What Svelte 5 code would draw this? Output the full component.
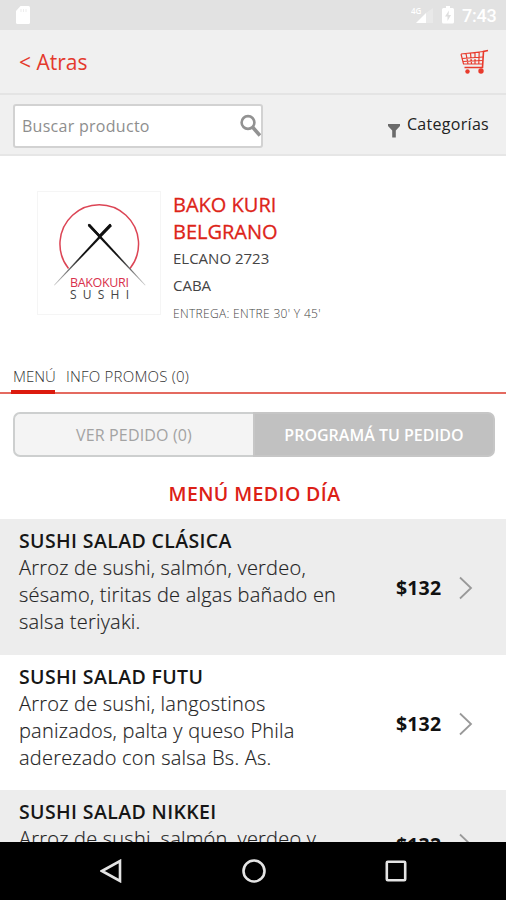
<script lang="ts">
  type Product = {
    name: string
    lines: string[]
    price: number
  }

  let search = $state('')

  const products: Product[] = [
    {
      name: 'SUSHI SALAD CLÁSICA',
      lines: ['Arroz de sushi, salmón, verdeo,', 'sésamo, tiritas de algas bañado en', 'salsa teriyaki.'],
      price: 132,
    },
    {
      name: 'SUSHI SALAD FUTU',
      lines: ['Arroz de sushi, langostinos', 'panizados, palta y queso Phila', 'aderezado con salsa Bs. As.'],
      price: 132,
    },
    {
      name: 'SUSHI SALAD NIKKEI',
      lines: ['Arroz de sushi, salmón, verdeo y'],
      price: 132,
    },
  ]
</script>

<div class="screen">
  <div class="status">
    <svg class="sd" width="16" height="19" viewBox="0 0 16 19">
      <path d="M5.500 0H13.500Q15 0 15 1.500V16.500Q15 18 13.500 18H2.500Q1 18 1 16.500V5Z" fill="#fff" />
      <path d="M6 3v3M8.500 3v3M11 3v3" stroke="#ededed" />
    </svg>
    <svg class="signal" width="23" height="18" viewBox="0 0 23 18">
      <path d="M22 2V17H15V7Z" fill="#e9e9e9" />
      <path d="M15 7V17H5Z" fill="#fff" />
      <text x="0" y="8" font-size="8" font-weight="600" fill="#fff">4G</text>
    </svg>
    <svg class="battery" width="12" height="18" viewBox="0 0 12 18">
      <path d="M4 0h4v2h2.500Q12 2 12 3.500v12.500Q12 17.500 10.500 17.500h-9Q0 17.500 0 16V3.500Q0 2 1.500 2H4Z" fill="#fff" />
      <path d="M7 4.500L3 10.500h2.500V15L9 9H6.500Z" fill="#dedede" />
    </svg>
    <span class="time">7:43</span>
  </div>

  <header>
    <span class="back">&lt; Atras</span>
    <svg width="29" height="26" viewBox="0 0 29 26" fill="none" stroke="#e83a2c">
      <path d="M28 1.500L23.500 2.500L22.500 18.500H4.500" stroke-width="1.600" />
      <path d="M1 5L23.500 2.500M1 5L3.500 15H22.500M2 9.500L23 8M3 12.500L22.700 11.500M6 4.500L8 15M10.500 4L11.500 15M15 3.500V15M19.200 3L18.800 15" stroke-width="1.200" />
      <circle cx="7.500" cy="22.500" r="2.200" fill="#e83a2c" stroke="none" />
      <circle cx="21" cy="22" r="2.700" fill="#e83a2c" stroke="none" />
    </svg>
  </header>

  <div class="filters">
    <label class="search">
      <input type="text" placeholder="Buscar producto" bind:value={search} />
      <svg width="22" height="24" viewBox="0 0 22 24" fill="none" stroke="#929292">
        <circle cx="9" cy="8.500" r="6.400" stroke-width="2.600" />
        <path d="M13.500 13L21 21.500" stroke-width="3.600" />
      </svg>
    </label>
    <div class="categories">
      <svg width="12" height="14" viewBox="0 0 12 14">
        <path d="M0 0H12V2L7.800 6.500V13.500H4.200V6.500L0 2Z" fill="#6b6b6b" />
      </svg>
      <span>Categorías</span>
    </div>
  </div>

  <section class="shop">
    <svg class="logo" width="124" height="124" viewBox="0 0 124 124">
      <defs>
        <linearGradient id="left-stick" gradientUnits="userSpaceOnUse" x1="72" y1="34" x2="17" y2="94">
          <stop offset="0.500" stop-color="#111" />
          <stop offset="1" stop-color="#ccc" />
        </linearGradient>
        <linearGradient id="right-stick" gradientUnits="userSpaceOnUse" x1="52" y1="34" x2="108" y2="94">
          <stop offset="0.500" stop-color="#111" />
          <stop offset="1" stop-color="#ccc" />
        </linearGradient>
      </defs>
      <rect x="0.500" y="0.500" width="123" height="123" fill="#fff" stroke="#f5f5f5" />
      <path d="M31.500 77.500A39.300 39.300 0 1 1 93 77.500" fill="none" stroke="#dc4555" stroke-width="1.500" />
      <path d="M73 33L75 35L17.500 94.500L17 94Z" fill="url(#left-stick)" />
      <path d="M51 35L53 33L108.500 94L108 94.500Z" fill="url(#right-stick)" />
      <path d="M73 34L62 45.500M52 34L63 45.500" stroke="#111" stroke-width="2.300" stroke-linecap="round" />
      <text x="33" y="96" textLength="59" font-size="12.500" fill="#d9304c">BAKOKURI</text>
      <text x="33" y="108" textLength="59" font-size="12" fill="#444">SUSHI</text>
    </svg>
    <div class="details">
      <h1>BAKO KURI<br />BELGRANO</h1>
      <p>ELCANO 2723</p>
      <p>CABA</p>
      <p class="delivery">ENTREGA: ENTRE 30' Y 45'</p>
    </div>
  </section>

  <nav>
    <span class="tab active">MENÚ</span>
    <span class="tab promos">INFO PROMOS (0)</span>
  </nav>

  <div class="actions">
    <button class="order">VER PEDIDO (0)</button>
    <button class="schedule">PROGRAMÁ TU PEDIDO</button>
  </div>

  <h2>MENÚ MEDIO DÍA</h2>

  <main>
    {#each products as product}
      <article>
        <div class="text">
          <h3>{product.name}</h3>
          {#each product.lines as line}
            <p>{line}</p>
          {/each}
        </div>
        <span class="price">${product.price}</span>
        <svg class="chevron" width="14" height="24" viewBox="0 0 14 24">
          <path d="M1 1.500L12 12L1 22.500" fill="none" stroke="#999" stroke-width="1.800" />
        </svg>
      </article>
    {/each}
  </main>

  <footer>
    <svg width="22" height="24" viewBox="0 0 22 24">
      <path d="M20 2V22L2 12Z" />
    </svg>
    <svg width="24" height="24" viewBox="0 0 24 24">
      <circle cx="12" cy="12" r="10.500" />
    </svg>
    <svg width="22" height="22" viewBox="0 0 22 22">
      <rect x="1.800" y="1.800" width="18.400" height="18.400" rx="1" />
    </svg>
  </footer>
</div>

<style>
  :global(body) {
    margin: 0;
    overflow: hidden;
  }

  .screen {
    display: flex;
    flex-direction: column;
    width: 506px;
    height: 900px;
    overflow: hidden;
    background: #fff;
    color: #222;
    font-family: 'Open Sans', sans-serif;
  }

  .screen * {
    box-sizing: border-box;
  }

  h1,
  h2,
  h3,
  p {
    margin: 0;
  }

  svg {
    display: block;
    flex: none;
  }

  .status {
    display: flex;
    flex: none;
    align-items: center;
    height: 30px;
    padding: 0 9px 0 15px;
    background: #e2e2e2;
    color: #fff;
  }

  .signal {
    margin-left: auto;
  }

  .battery {
    margin: 0 8px 0 8px;
  }

  .time {
    width: 35px;
    padding-top: 2px;
    font: 500 18px/30px Roboto, sans-serif;
    letter-spacing: -0.2px;
    white-space: nowrap;
  }

  header {
    display: flex;
    flex: none;
    align-items: center;
    justify-content: space-between;
    height: 65px;
    padding: 0 17px 0 19px;
    background: #f0f0f0;
    border-bottom: 2px solid #e4e4e4;
  }

  .back {
    color: #e4392d;
    font-size: 21px;
    line-height: 28px;
  }

  .filters {
    display: flex;
    flex: none;
    align-items: center;
    justify-content: space-between;
    height: 61px;
    padding: 2px 17px 0 13px;
    background: #f0f0f0;
    border-bottom: 2px solid #e6e6e6;
  }

  .search {
    display: flex;
    align-items: center;
    width: 250px;
    height: 44px;
    padding: 0 0 0 7px;
    background: #fff;
    border: 2px solid #d2d2d2;
    border-radius: 3px;
  }

  input {
    flex: 1;
    min-width: 0;
    padding: 0;
    border: 0;
    outline: 0;
    font: 16px 'Open Sans', sans-serif;
    letter-spacing: 0.28px;
  }

  input::placeholder {
    color: #8e8e8e;
  }

  .categories {
    display: flex;
    align-items: center;
    gap: 7px;
    font-size: 16px;
    letter-spacing: 0.3px;
    line-height: 22px;
    padding-bottom: 4px;
  }

  .categories svg {
    margin-top: 15px;
  }

  .shop {
    display: flex;
    flex: none;
    gap: 12px;
    height: 205px;
    padding: 35px 0 0 37px;
  }

  h1 {
    color: #dd2418;
    font-size: 20px;
    font-weight: 400;
    line-height: 27px;
    -webkit-text-stroke: 0.3px #dd2418;
  }

  .details p {
    color: #444;
    font-size: 15px;
    line-height: 27px;
  }

  .details .delivery {
    font-size: 12px;
    font-weight: 300;
    letter-spacing: 0.32px;
    line-height: 29px;
  }

  nav {
    display: flex;
    flex: none;
    gap: 11px;
    height: 33px;
    padding-left: 11px;
    border-bottom: 2px solid #e46a60;
  }

  .tab {
    height: 33px;
    color: #333;
    font-size: 15px;
    font-weight: 300;
    line-height: 31px;
  }

  .promos {
    letter-spacing: 0.22px;
  }

  .active {
    width: 44px;
    padding-left: 2px;
    border-bottom: 4px solid #dc1a0e;
  }

  .actions {
    display: flex;
    flex: none;
    height: 45px;
    margin: 18px 11px 0 13px;
  }

  button {
    flex: 1;
    padding: 0;
    border: 2px solid #cdcfcf;
    font: 16px 'Open Sans', sans-serif;
  }

  .order {
    background: #f4f4f4;
    border-right: 0;
    border-radius: 7px 0 0 7px;
    color: #a3a3a3;
    letter-spacing: 0.15px;
  }

  .schedule {
    background: #c1c1c1;
    border-color: #c6c6c6;
    border-radius: 0 7px 7px 0;
    color: #fff;
    font-weight: 600;
  }

  h2 {
    flex: none;
    height: 62px;
    padding-top: 22px;
    padding-left: 3px;
    color: #dc2016;
    font-size: 19.5px;
    font-weight: 600;
    letter-spacing: 0.4px;
    line-height: 30px;
    text-align: center;
  }

  main {
    flex: 1;
    min-height: 0;
    overflow: hidden;
  }

  article {
    display: flex;
    align-items: center;
    min-height: 108px;
    padding: 8px 33px 19.5px 19px;
  }

  article:nth-child(odd) {
    background: #ededed;
  }

  .text {
    flex: 1;
    align-self: flex-start;
    white-space: nowrap;
  }

  h3 {
    color: #161616;
    font-size: 19.5px;
    font-weight: 600;
    letter-spacing: 0.37px;
    line-height: 27px;
  }

  .text p {
    color: #222;
    font-size: 20px;
    font-weight: 300;
    letter-spacing: 0.22px;
    line-height: 27px;
    -webkit-text-stroke: 0.15px #222;
  }

  .price {
    width: 46px;
    margin: 13px 17px 0 0;
    color: #111;
    font-size: 19.5px;
    font-weight: 700;
    letter-spacing: 0.15px;
    line-height: 27px;
  }

  .chevron {
    margin-top: 14px;
  }

  footer {
    display: flex;
    flex: none;
    align-items: center;
    justify-content: space-between;
    height: 58px;
    padding: 0 99px 0 100px;
    background: #000;
  }

  footer svg {
    fill: none;
    stroke: #e4e4e4;
    stroke-width: 2.6;
  }
</style>
